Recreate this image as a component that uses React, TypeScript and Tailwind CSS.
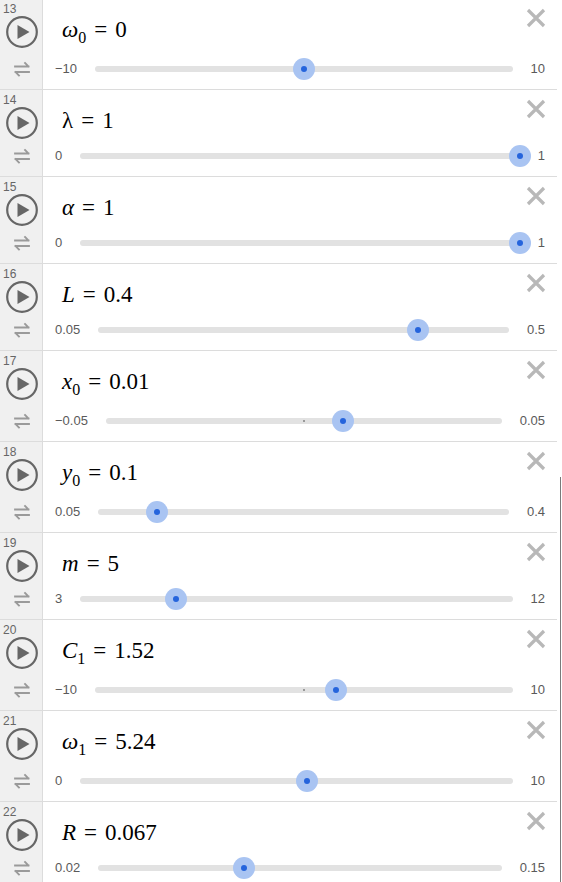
import React from 'react'

type Row = {
  n: number
  v: string
  italic?: boolean
  sub?: string
  eq: string
  min: string
  max: string
  frac: number
  tick?: number
}

const rows: Row[] = [
  { n: 13, v: 'ω', italic: true, sub: '0', eq: '0', min: '−10', max: '10', frac: 0.5, tick: 0.5 },
  { n: 14, v: 'λ', eq: '1', min: '0', max: '1', frac: 1 },
  { n: 15, v: 'α', italic: true, eq: '1', min: '0', max: '1', frac: 1 },
  { n: 16, v: 'L', italic: true, eq: '0.4', min: '0.05', max: '0.5', frac: 0.7778 },
  { n: 17, v: 'x', italic: true, sub: '0', eq: '0.01', min: '−0.05', max: '0.05', frac: 0.6, tick: 0.5 },
  { n: 18, v: 'y', italic: true, sub: '0', eq: '0.1', min: '0.05', max: '0.4', frac: 0.1429 },
  { n: 19, v: 'm', italic: true, eq: '5', min: '3', max: '12', frac: 0.2222 },
  { n: 20, v: 'C', italic: true, sub: '1', eq: '1.52', min: '−10', max: '10', frac: 0.576, tick: 0.5 },
  { n: 21, v: 'ω', italic: true, sub: '1', eq: '5.24', min: '0', max: '10', frac: 0.524 },
  { n: 22, v: 'R', italic: true, eq: '0.067', min: '0.02', max: '0.15', frac: 0.3615 },
]

function PlayButton() {
  return (
    <svg width="34" height="34" viewBox="0 0 34 34">
      <circle cx="17" cy="17" r="14.8" fill="none" stroke="#666" strokeWidth="2.2" />
      <path d="M12.5 10 L24.5 17 L12.5 24 Z" fill="#666" />
    </svg>
  )
}

function LoopIcon() {
  return (
    <svg width="18" height="16" viewBox="0 0 18 16" fill="none" stroke="#9a9a9a" strokeWidth="1.8" strokeLinecap="square">
      <path d="M2 5.5 H15.5 M12 2 L15.5 5.5" />
      <path d="M16 11 H2.5 M6 14.5 L2.5 11" />
    </svg>
  )
}

function CloseIcon() {
  return (
    <svg width="20" height="20" viewBox="0 0 20 20" stroke="#b8b8b8" strokeWidth="3.2" strokeLinecap="butt">
      <path d="M2 2 L18 18 M18 2 L2 18" />
    </svg>
  )
}

function SliderRow({ row, first }: { row: Row; first: boolean }) {
  return (
    <div className={`flex border-b border-[#dcdcdc] ${first ? '-mt-[1px]' : ''}`}>
      {/* gutter */}
      <div className="w-[43px] shrink-0 bg-[#f0f0f0] border-r border-[#dcdcdc] flex flex-col items-center">
        <div className="self-start pl-[3px] pt-[3px] text-[12px] leading-[14px] text-[#666]">{row.n}</div>
        <div className="mt-[-1px] ml-[1px]">
          <PlayButton />
        </div>
        <div className={`ml-[1px] ${row.sub ? 'mt-[12px]' : 'mt-[8px]'}`}>
          <LoopIcon />
        </div>
      </div>

      {/* content */}
      <div className="flex-1 pl-[12px] pr-[12px] pt-[9px] pb-[9px]">
        <div className="flex justify-between items-start">
          <div
            className={`mt-[8px] ml-[7px] font-['Liberation_Serif','DejaVu_Serif',serif] text-[23px] leading-[28px] text-black whitespace-nowrap ${row.sub ? 'h-[32px]' : 'h-[28px]'}`}
          >
            <span className={row.italic ? 'italic' : ''}>{row.v}</span>
            {row.sub && <span className="text-[16px] align-[-6px]">{row.sub}</span>}
            <span className="mx-[8px]">=</span>
            <span>{row.eq}</span>
          </div>
          <button className="-mr-[1px]">
            <CloseIcon />
          </button>
        </div>
        <div className="flex items-center gap-[18px] h-[22px] mt-[10px] font-['Liberation_Sans',Arial,sans-serif] text-[13px] text-[#5a5a5a]">
          <span className="whitespace-nowrap">{row.min}</span>
          <div className="relative flex-1 h-[6px] rounded-full bg-[#e2e2e2]">
            {row.tick !== undefined && (
              <div
                className="absolute top-[2px] w-[2px] h-[2px] bg-[#999]"
                style={{ left: `calc(${row.tick * 100}% - 1px)` }}
              />
            )}
            <div
              className="absolute top-1/2 w-[22px] h-[22px] -mt-[11px] -ml-[11px] rounded-full bg-[#a9c4f2] flex items-center justify-center"
              style={{ left: `${row.frac * 100}%` }}
            >
              <div className="w-[6px] h-[6px] rounded-full bg-[#2564dc]" />
            </div>
          </div>
          <span className="whitespace-nowrap">{row.max}</span>
        </div>
      </div>
    </div>
  )
}

export default function App() {
  return (
    <div className="flex w-[562px] h-[882px] overflow-hidden bg-white font-['Liberation_Sans',Arial,sans-serif]">
      <div className="w-[557px] shrink-0">
        {rows.map((row, i) => (
          <SliderRow key={row.n} row={row} first={i === 0} />
        ))}
      </div>
      <div className="flex-1 flex flex-col">
        <div className="h-[477px]" />
        <div className="flex-1 ml-[3px] w-[1px] bg-[#7a7a7a]" />
      </div>
    </div>
  )
}
